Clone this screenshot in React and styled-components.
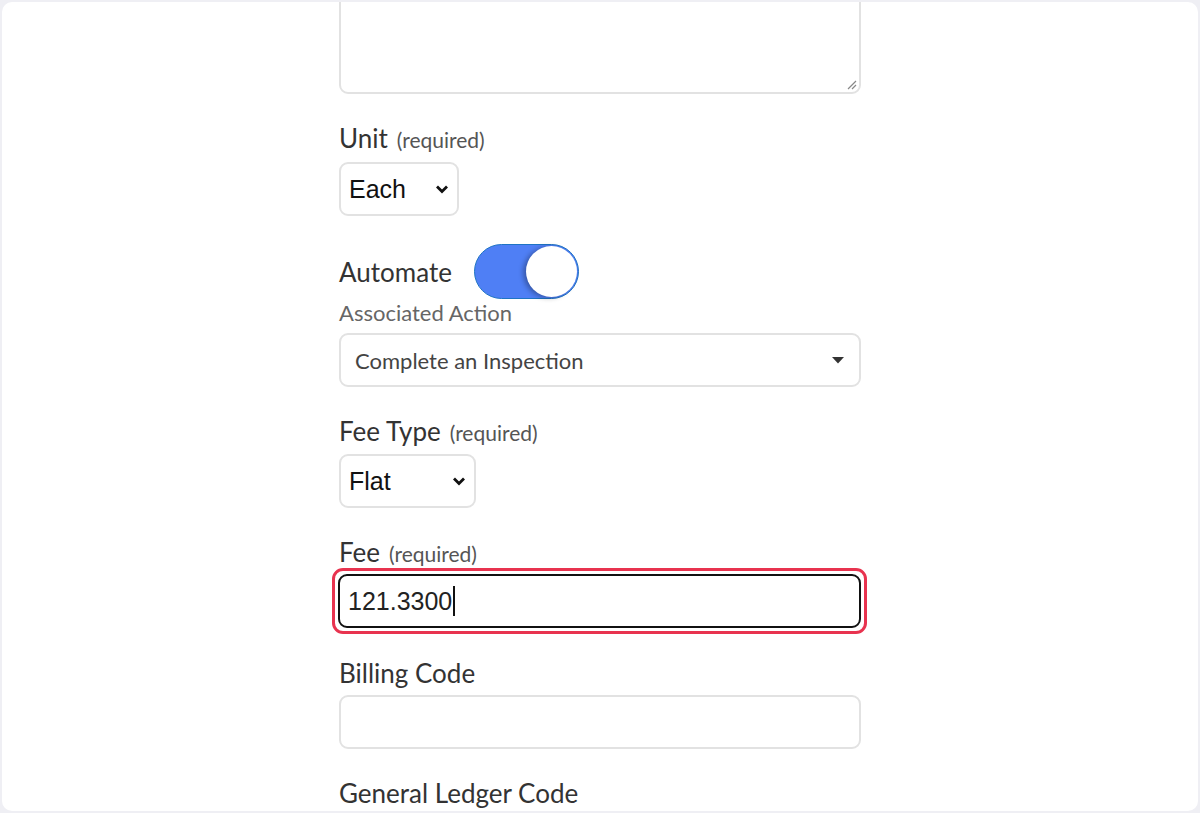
import React from "react";
import styled, { createGlobalStyle } from "styled-components";

const GlobalStyle = createGlobalStyle`
  html, body {
    margin: 0;
    padding: 0;
    height: 100%;
    background: #efeff4;
  }
  #root {
    height: 100%;
  }
`;

export const Frame = styled.div`
  box-sizing: border-box;
  height: 813px;
  padding: 2px;
`;

export const Card = styled.div`
  height: 100%;
  background: #ffffff;
  border-radius: 10px;
  overflow: hidden;
  display: flex;
  justify-content: center;
`;

/* the form is scrolled, so its top lies above the card */
export const Form = styled.div`
  width: 522px;
  margin-top: -40px;
  font-family: Lato, "Open Sans", sans-serif;
  color: #333;
`;

export const TextArea = styled.div`
  box-sizing: border-box;
  height: 132px;
  border: 2px solid #e2e2e2;
  border-radius: 9px;
  position: relative;
`;

export const Grip = styled.svg`
  position: absolute;
  right: 2px;
  bottom: 2px;
`;

export const Field = styled.div`
  margin-top: ${(props) => props.gap || 28}px;
`;

export const Label = styled.div`
  height: ${(props) => (props.muted ? 28 : 32)}px;
  font-size: ${(props) => (props.muted ? 22 : 26)}px;
  line-height: ${(props) => (props.muted ? 28 : 32)}px;
  color: ${(props) => (props.muted ? "#666" : "#333")};
  white-space: nowrap;
`;

export const Req = styled.span`
  font-size: 21px;
  line-height: 0;
  color: #555;
  margin-left: 9px;
`;

export const Select = styled.div`
  box-sizing: border-box;
  margin-top: ${(props) => props.top || 7}px;
  width: ${(props) => props.width}px;
  height: 54px;
  border: 2px solid #e2e2e2;
  border-radius: 9px;
  display: flex;
  align-items: center;
  justify-content: space-between;
  padding: 0 8px 0 8px;
  font-family: "Liberation Sans", Arial, sans-serif;
  font-size: 25px;
  color: #111;
`;

export const WideSelect = styled(Select)`
  width: auto;
  padding: 0 15px 0 14px;
  font-family: Lato, sans-serif;
  font-size: 22px;
  color: #444;
`;

export const Row = styled.div`
  display: flex;
  align-items: center;
  gap: 22px;
  height: 55px;
`;

export const Toggle = styled.div`
  box-sizing: border-box;
  width: 105px;
  height: 55px;
  border-radius: 28px;
  background: #4f7ff5;
  border: 1px solid #1f74c4;
  position: relative;
`;

export const Knob = styled.div`
  position: absolute;
  right: 1px;
  top: 1px;
  width: 51px;
  height: 51px;
  border-radius: 50%;
  background: #fff;
  box-shadow: -3px 1px 5px rgba(0, 0, 0, 0.3);
`;

export const Highlight = styled.div`
  margin-top: ${(props) => props.top || 0}px;
  margin-left: -7px;
  margin-right: -6px;
  padding: 3px;
  border: 3px solid #e8334f;
  border-radius: 11px;
`;

export const Input = styled.div`
  box-sizing: border-box;
  height: ${(props) => props.height || 54}px;
  border: 2px solid ${(props) => (props.focus ? "#111" : "#e2e2e2")};
  border-radius: 9px;
  display: flex;
  align-items: center;
  padding-left: 8px;
  margin-top: ${(props) => props.top || 0}px;
  font-family: "Liberation Sans", Arial, sans-serif;
  font-size: 25px;
  color: #222;
`;

export const Caret = styled.span`
  display: inline-block;
  width: 1.5px;
  height: 30px;
  background: #111;
  margin-left: 1px;
`;

const Chevron = () => (
  <svg width="14" height="10" viewBox="0 0 14 10">
    <path d="M2 2.5 L7 7.5 L12 2.5" fill="none" stroke="#111" strokeWidth="2.8" />
  </svg>
);

const Triangle = () => (
  <svg width="12" height="7" viewBox="0 0 12 7">
    <path d="M0 0 H12 L6 6.5 Z" fill="#333" />
  </svg>
);

const App = () => {
  return (
    <>
      <GlobalStyle />
      <Frame>
        <Card>
          <Form>
            <TextArea>
              <Grip width="12" height="12" viewBox="0 0 12 12">
                <path d="M11 3 L3 11 M11 7 L7 11" stroke="#888" strokeWidth="1.2" />
              </Grip>
            </TextArea>

            <Field gap={28}>
              <Label>
                Unit<Req>(required)</Req>
              </Label>
              <Select width={120} top={8}>
                Each
                <Chevron />
              </Select>
            </Field>

            <Field gap={28}>
              <Row>
                <Label>Automate</Label>
                <Toggle>
                  <Knob />
                </Toggle>
              </Row>
              <Label muted>Associated Action</Label>
              <WideSelect top={6}>
                Complete an Inspection
                <Triangle />
              </WideSelect>
            </Field>

            <Field gap={28}>
              <Label>
                Fee Type<Req>(required)</Req>
              </Label>
              <Select width={137} top={7}>
                Flat
                <Chevron />
              </Select>
            </Field>

            <Field gap={28}>
              <Label>
                Fee<Req>(required)</Req>
              </Label>
              <Highlight>
                <Input focus>
                  121.3300
                  <Caret />
                </Input>
              </Highlight>
            </Field>

            <Field gap={23}>
              <Label>Billing Code</Label>
              <Input top={6} height={54} />
            </Field>

            <Field gap={28}>
              <Label>General Ledger Code</Label>
            </Field>
          </Form>
        </Card>
      </Frame>
    </>
  );
};

export default App;
